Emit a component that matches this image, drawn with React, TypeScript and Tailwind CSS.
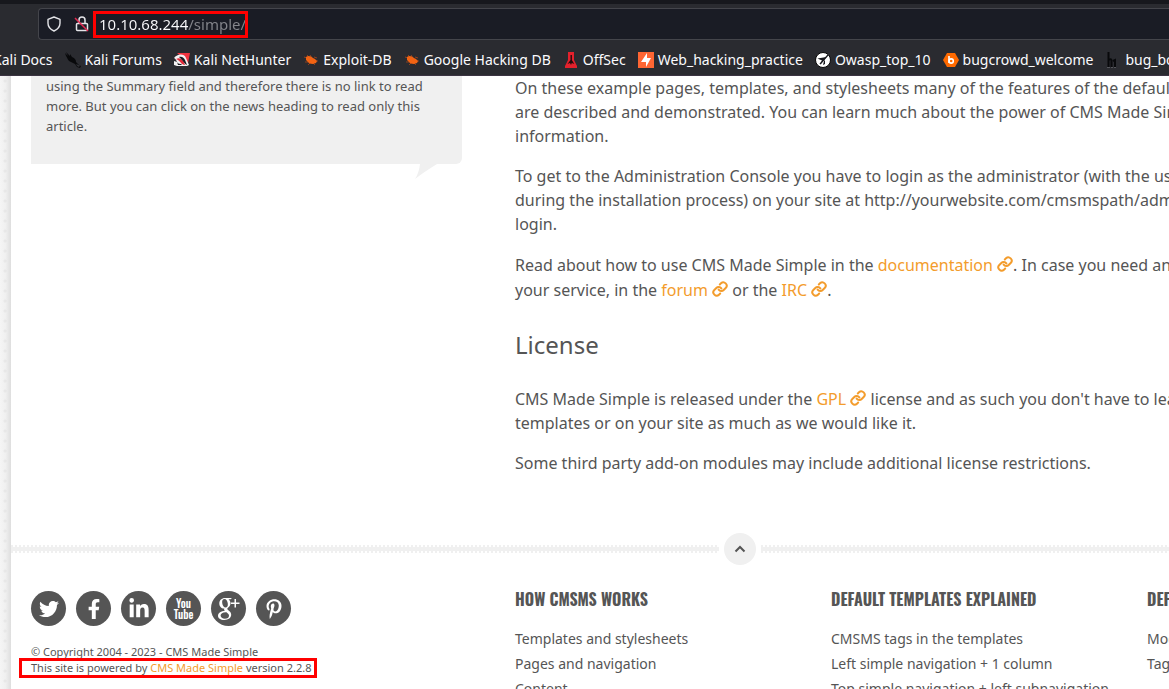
import type { ReactNode } from "react";
import { FaTwitter, FaFacebookF, FaLinkedinIn, FaPinterestP } from "react-icons/fa";
import { Link } from "lucide-react";

type Bookmark = { label: string; icon: ReactNode };

const Talon = () => (
  <svg viewBox="0 0 16 16" className="size-4">
    <path d="M0 1l3 3-2-4 4 4 0-2 2 3c3 1 4 3 4 5l3 3 2 1-1 2-3-1-2-3-4-2C3 9 3 7 1 4z" fill="#08090b" />
    <path d="M11 12l4 1.500-1 1.500-2-1z" fill="#2f3035" />
  </svg>
);

const NetHunter = () => (
  <svg viewBox="0 0 16 16" className="size-4">
    <path d="M3 1h13l-2 10-2 3-4-9z" fill="#f23440" />
    <path d="M0 6C3 2 10 1 12 6l3 7-2 1H3l-3-1V9l3 1c-1-2-1-3-3-4z" fill="#f4f2f3" />
    <path d="M2 7c4-2 7 0 9 6-4 0-4-4-9-6z" fill="#e32b3a" />
    <path d="M5 5c3-1 5 1 6 3l2 5C10 12 9 8 5 5zM3 10c1 2 3 2 5 2l-1 1H4z" fill="#1b1c21" />
  </svg>
);

const Exploit = () => (
  <svg viewBox="0 0 16 16" className="size-4">
    <path
      d="M1 5l3 1M2 10h4M5 13l2-2M7 3l2 3M11 5l3 1M11 9l4 0M4 3l2 2M10 11l2 2"
      stroke="#a8461b"
      strokeWidth="0.800"
      fill="none"
    />
    <path d="M3 5c2-2 5-1 7 1l2 1 2 2-1 2-3 1c-3 0-4-1-5-2L3 8z" fill="#f26313" />
  </svg>
);

const OffSec = () => (
  <svg viewBox="0 0 16 16" className="size-4">
    <path d="M5 0h6v8l3 6v2H2v-2l3-6z" fill="#e3212c" />
    <path d="M7.500 3h1.400v5l2.400 4-2.500-1-.8 2-1-2-2.500 1 3-4z" fill="#24090c" />
  </svg>
);

const Burp = () => (
  <svg viewBox="0 0 16 16" className="size-4">
    <path d="M0 0h16v16H0z" fill="#ff6633" />
    <path d="M9 1v5h4l-5 9v-5H3z" fill="#fff" />
  </svg>
);

const Owasp = () => (
  <svg viewBox="0 0 16 16" className="size-4">
    <circle cx="8" cy="8" r="7.500" fill="#fff" stroke="#090909" />
    <path d="M2.500 6.500l9-1.500-6 7.500 1.500-4zM9 9l1-1v4l-2 1z" fill="#17181d" />
    <path d="M13 3L5 12" stroke="#17181d" strokeWidth="1.300" />
  </svg>
);

const Bugcrowd = () => (
  <svg viewBox="0 0 16 16" className="size-4">
    <path d="M4 1h8l4 7-4 7H4L0 8z" fill="#ff6a00" />
    <path d="M6 4v7" stroke="#fff" strokeWidth="1.600" />
    <circle cx="8.200" cy="9" r="2.100" fill="none" stroke="#fff" strokeWidth="1.600" />
  </svg>
);

const HackerOne = () => (
  <svg viewBox="0 0 16 16" className="size-4">
    <path d="M3.500 0v15M3.500 8c3-2 3 0 3 1v6M8 9l2-1v7" stroke="#08090b" strokeWidth="2" fill="none" />
    <path d="M2 15.500h3M6 15.500h2M9 15.500h2" stroke="#55565b" />
  </svg>
);

const bookmarks: Bookmark[] = [
  { label: "Kali Forums", icon: <Talon /> },
  { label: "Kali NetHunter", icon: <NetHunter /> },
  { label: "Exploit-DB", icon: <Exploit /> },
  { label: "Google Hacking DB", icon: <Exploit /> },
  { label: "OffSec", icon: <OffSec /> },
  { label: "Web_hacking_practice", icon: <Burp /> },
  { label: "Owasp_top_10", icon: <Owasp /> },
  { label: "bugcrowd_welcome", icon: <Bugcrowd /> },
  { label: "bug_bounty", icon: <HackerOne /> },
];

const YouTube = () => (
  <span className="flex flex-col items-center font-['Oswald','Roboto_Condensed','Open_Sans_Condensed','Noto_Sans_Condensed','Liberation_Sans',sans-serif] text-[11px] leading-[11px] font-medium">
    <span>You</span>
    <span>Tube</span>
  </span>
);

const GooglePlus = () => (
  <svg viewBox="0 0 24 24" className="size-6" fill="#fff">
    <path
      fillRule="evenodd"
      d="M8 1h7l-1.500 1.200H11.500C13 3.500 13.500 4.800 13.500 6.300c0 2-1 3.200-2.300 4.200-1.300 1-1.200 1.700.1 2.700 1.900 1.400 2.900 2.500 2.900 4.600 0 3-2.800 5.200-6.900 5.200-3.900 0-6.300-1.600-6.300-4.200 0-3 3.200-4.600 6.900-4.700-.8-.8-1-1.600-.6-2.600C4.300 11.600 2.300 9.500 2.300 6.500 2.300 3.300 4.800 1 8 1zM7.500 2C5.800 2 4.900 3.600 5.200 6c.3 2.500 1.700 4.500 3.400 4.500 1.600 0 2.500-1.600 2.200-4C10.500 4 9.100 2 7.500 2zM8.600 15.200c-2.900 0-5 1.300-5 3.400 0 2 1.800 3.200 4.300 3.200 2.600 0 4.100-1.100 4.100-3 0-1.500-.9-2.200-2.500-3.500z"
    />
    <path d="M17.500 2H19v3.500h3.500V7H19v3.500h-1.500V7H14V5.500h3.500z" />
  </svg>
);

const socials: Bookmark[] = [
  { label: "Twitter", icon: <FaTwitter className="size-5" /> },
  { label: "Facebook", icon: <FaFacebookF className="size-5" /> },
  { label: "LinkedIn", icon: <FaLinkedinIn className="size-[22px]" /> },
  { label: "YouTube", icon: <YouTube /> },
  { label: "Google Plus", icon: <GooglePlus /> },
  { label: "Pinterest", icon: <FaPinterestP className="size-5" /> },
];

const footerColumns = [
  { title: "How CMSMS Works", links: ["Templates and stylesheets", "Pages and navigation", "Content"] },
  {
    title: "Default Templates Explained",
    links: ["CMSMS tags in the templates", "Left simple navigation + 1 column", "Top simple navigation + left subnavigation"],
  },
  { title: "Default Extensions", links: ["Modules", "Tags"] },
];

function External({ children }: { children: ReactNode }) {
  return (
    <a href="#" className="text-[#f39c2c]">
      {children} <Link className="inline size-4 align-[-1px]" strokeWidth={3} />
    </a>
  );
}

function DottedRule({ className }: { className: string }) {
  return (
    <div className={className}>
      <div className="h-2 bg-[linear-gradient(#f0f0f0,#f0f0f0),repeating-linear-gradient(to_right,#f0f0f0_0_2px,#fff_2px_4px)] bg-[length:100%_4px,100%_100%] bg-center bg-no-repeat" />
    </div>
  );
}

export default function App() {
  return (
    <div className="flex h-screen flex-col overflow-hidden bg-white font-['Noto_Sans',sans-serif] text-[#555]">
      <header className="shrink-0 overflow-hidden border-t-4 border-b border-t-[#17181d] border-b-[#3b3442] bg-[#2a2b30] pt-1 text-[#fbfbfe]">
        <div className="ml-[38px] flex h-8 items-center rounded-l border border-r-0 border-[#44454b] bg-[#1a1c25] pl-[7px]">
          <svg viewBox="0 0 16 16" className="size-4" fill="none" stroke="#e4e4e8" strokeWidth="1.400">
            <path d="M8 1l6 2.300v4C14 11 11.500 13.500 8 15 4.500 13.500 2 11 2 7.300v-4z" strokeLinejoin="round" />
          </svg>
          <svg viewBox="0 0 16 16" className="ml-3 size-4" fill="none" stroke="#e4e4e8" strokeWidth="1.500">
            <rect x="2.500" y="7.500" width="11" height="7" rx="1" />
            <path d="M5 7V4a3 3 0 0 1 6 0v3" />
            <path d="M1 2l13 13" stroke="#e22850" />
          </svg>
          <div className="ml-[3px] border-3 border-[#ff0000]">
            <input
              aria-label="Address"
              defaultValue="10.10.68.244/simple/"
              className="block h-[21px] w-[149px] bg-[linear-gradient(to_right,#fbfbfe_92px,#85868c_92px)] bg-clip-text pl-[3px] text-[15px] text-transparent outline-none"
            />
          </div>
        </div>
        <nav aria-label="Bookmarks" className="-ml-[7px] flex h-[35px] items-center gap-3 pt-1 text-sm whitespace-nowrap">
          <a href="#">Kali Docs</a>
          {bookmarks.map((b) => (
            <a key={b.label} href="#" className="flex shrink-0 items-center gap-1">
              {b.icon}
              {b.label}
            </a>
          ))}
        </nav>
      </header>

      <div className="flex min-h-0 flex-1 overflow-hidden">
        <div className="w-[11px] shrink-0 bg-[radial-gradient(#0000000a_1px,transparent_2px),linear-gradient(to_right,#f5f5f5,#f0f0f0_50%,#dedede)] bg-[length:10px_10px,100%_100%]" />
        <div className="min-w-0 flex-1 overflow-hidden whitespace-nowrap">
          <div className="flex items-start pl-5">
            <aside className="relative w-[431px] shrink-0 rounded-br-md bg-[#f0f0f0] px-[15px] pb-7 text-[13px] leading-5 whitespace-normal">
              <p>
                using the Summary field and therefore there is no link to read more. But you can click on the news heading to
                read only this article.
              </p>
              <svg viewBox="0 0 22 15" className="absolute top-full right-[25px] h-[15px] w-[22px]">
                <path d="M5 0h17Q9 8 0 15Q4 9 5 0z" fill="#f0f0f0" />
              </svg>
            </aside>
            <main className="ml-[53px] text-base">
              <p className="mb-4">
                On these example pages, templates, and stylesheets many of the features of the default
                <br />
                are described and demonstrated. You can learn much about the power of CMS Made Simple
                <br />
                information.
              </p>
              <p className="mb-4">
                To get to the Administration Console you have to login as the administrator (with the username
                <br />
                during the installation process) on your site at http://yourwebsite.com/cmsmspath/admin
                <br />
                login.
              </p>
              <p className="pt-px leading-[25px]">
                Read about how to use CMS Made Simple in the <External>documentation</External>. In case you need any
                <br />
                your service, in the <External>forum</External> or the <External>IRC</External>.
              </p>
              <h2 className="my-6 text-2xl leading-[36px]">License</h2>
              <p className="mb-4">
                CMS Made Simple is released under the <External>GPL</External> license and as such you don't have to leave
                <br />
                templates or on your site as much as we would like it.
              </p>
              <p>Some third party add-on modules may include additional license restrictions.</p>
            </main>
          </div>

          <div className="mt-[58px] flex items-center">
            <DottedRule className="w-[708px] shrink-0" />
            <a href="#" aria-label="Back to top" className="mx-[5px] flex size-8 shrink-0 items-center justify-center rounded-full bg-[#f0f0f0]">
              <svg viewBox="0 0 12 12" className="size-3" fill="none" stroke="#555" strokeWidth="2">
                <path d="M1.500 8.500L6 4l4.500 4.500" />
              </svg>
            </a>
            <DottedRule className="min-w-0 flex-1" />
          </div>

          <footer className="flex items-start pt-5 pl-5">
            <div className="w-[484px] shrink-0 pt-1.5">
              <div className="flex gap-[10px]">
                {socials.map((s) => (
                  <a
                    key={s.label}
                    href="#"
                    aria-label={s.label}
                    className="flex size-[35px] items-center justify-center rounded-full bg-[#555] text-white"
                  >
                    {s.icon}
                  </a>
                ))}
              </div>
              <div className="mt-[18px] w-fit text-[11px] leading-4">
                <p>© Copyright 2004 - 2023 - CMS Made Simple</p>
                <p className="relative w-fit">
                  This site is powered by{" "}
                  <a href="#" className="text-[#f39c2c]">
                    CMS Made Simple
                  </a>{" "}
                  version 2.2.8
                  <span className="absolute -top-[2px] -right-[6px] -bottom-[2px] -left-[12px] border-3 border-[#ff0000]" />
                </p>
              </div>
            </div>
            {footerColumns.map((c) => (
              <section key={c.title} className="w-[316px] shrink-0">
                <h3 className="mb-[13px] font-['Oswald','Roboto_Condensed','Open_Sans_Condensed','Noto_Sans_Condensed','Liberation_Sans',sans-serif] text-base leading-7 font-bold uppercase">
                  {c.title}
                </h3>
                <ul className="text-sm leading-[25px]">
                  {c.links.map((l) => (
                    <li key={l}>
                      <a href="#">{l}</a>
                    </li>
                  ))}
                </ul>
              </section>
            ))}
          </footer>
        </div>
      </div>
    </div>
  );
}
